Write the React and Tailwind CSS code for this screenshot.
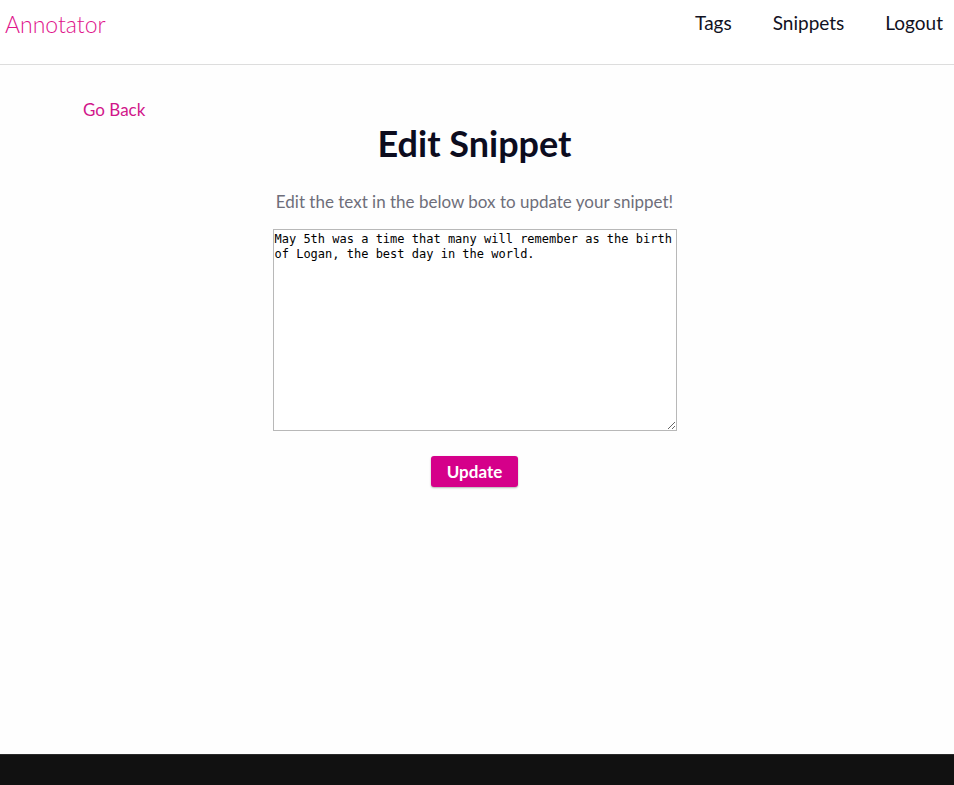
export default function App() {
  return (
    <div className="min-h-screen flex flex-col bg-[#fefefe]" style={{ fontFamily: 'Lato, "Open Sans", sans-serif' }}>
      <nav className="h-[65px] bg-white border-b border-[#dddddd] flex items-start justify-between pl-[5px] pr-[11px]">
        <div className="text-[23px] font-light text-[#e0138b] mt-[8px] leading-[32px]">Annotator</div>
        <div className="flex gap-[41px] text-[19px] text-[#111122] mt-[9px] leading-[28px]">
          <a>Tags</a>
          <a>Snippets</a>
          <a>Logout</a>
        </div>
      </nav>
      <main className="flex-1 flex flex-col">
        <div className="pl-[83px] pt-[33px] text-[17px] leading-[24px] text-[#d1168a]">
          <a>Go Back</a>
        </div>
        <div className="flex flex-col items-center mr-[5px]">
          <h1 className="text-[36px] font-bold leading-[44px] text-[#0c0c1e] -mt-[1px]">Edit Snippet</h1>
          <p className="text-[17px] leading-[24px] text-[#6e6e7a] mt-[25px]">Edit the text in the below box to update your snippet!</p>
          <textarea
            className="mt-[15px] w-[404px] h-[202px] bg-white border border-[#b8b8b8] px-[1px] py-[2px] text-[12px] text-black"
            style={{ fontFamily: '"DejaVu Sans Mono", monospace', lineHeight: '15px', resize: 'both' }}
            defaultValue="May 5th was a time that many will remember as the birth of Logan, the best day in the world."
          />
          <button className="mt-[25px] w-[87px] h-[31px] rounded-[3px] bg-[#d5008a] text-white text-[17px] font-bold shadow-[0_1px_2px_rgba(0,0,0,0.3)]">
            Update
          </button>
        </div>
      </main>
      <footer className="h-[31px] bg-[#111111] border-t border-[#2a2a2a]"></footer>
    </div>
  );
}
